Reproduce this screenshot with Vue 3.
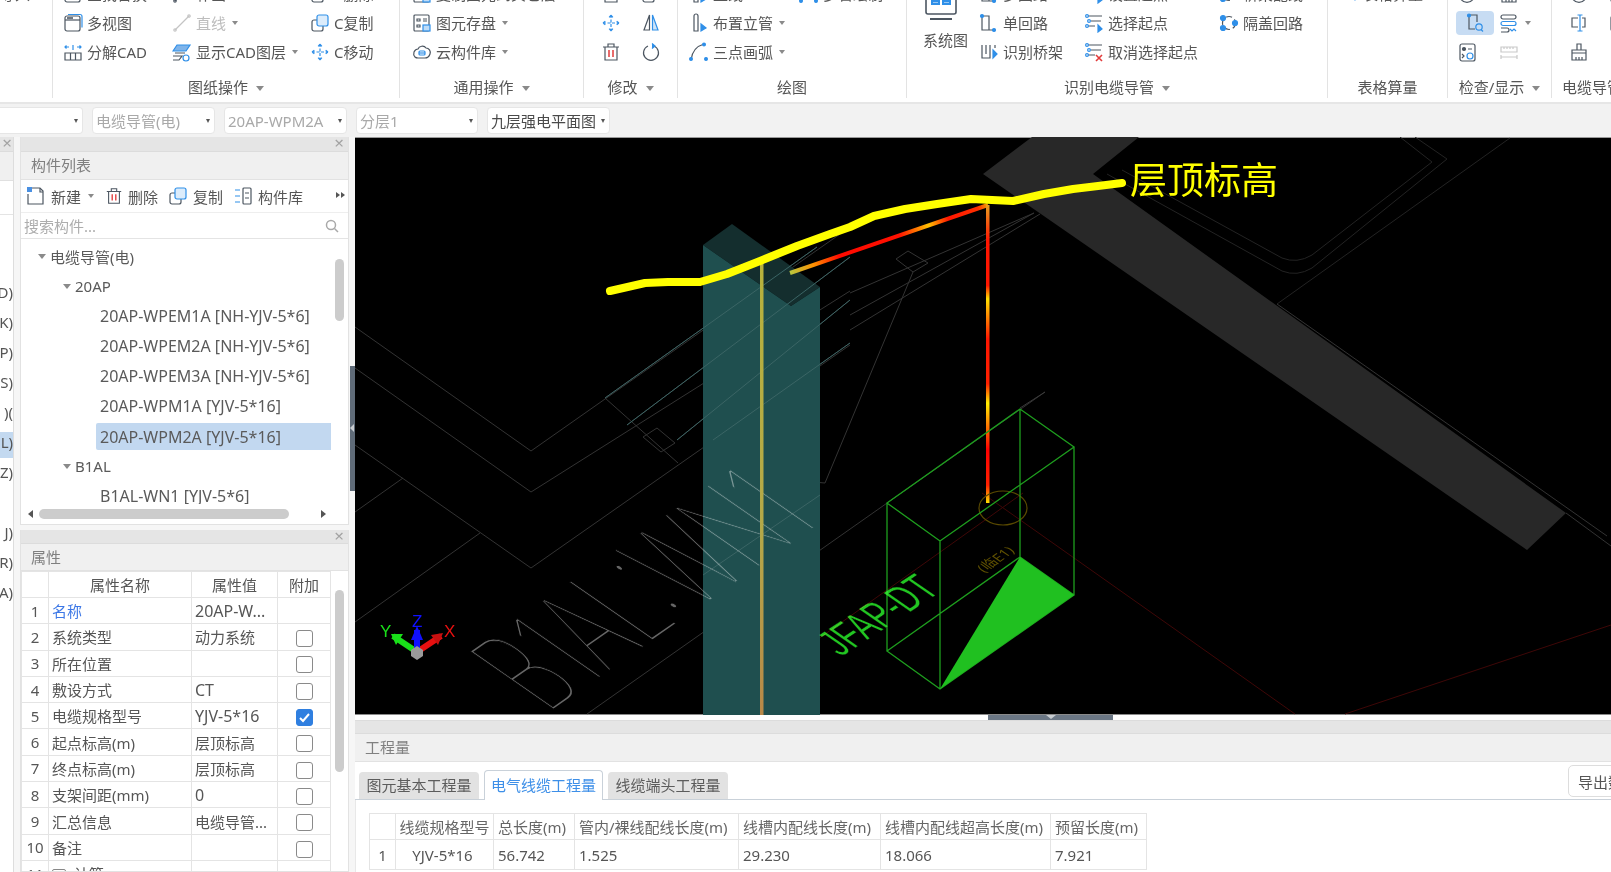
<script setup>
const D = '#4c5661'
const B = '#2f8fe8'

// inner markup of the ribbon icons, 20x20
const icons = {
  blank: '',
  view: `<rect x="2" y="3" width="15" height="15" rx="2"/><path d="M2 7h15"/><path d="M5 1.5h12a2 2 0 0 1 2 2v11" stroke="${B}"/><path d="M4 5h6" stroke-width="1.6"/>`,
  explode: `<path d="M2 11h16v7H2zM7.500 11v7M12.500 11v7"/><path d="M2 5h4M3.500 3.500 2 5l1.500 1.500M18 5h-4M16.500 3.500 18 5l-1.500 1.500M10 3v5" stroke="${B}"/>`,
  line: `<path d="M3 17 17 3"/><circle cx="3" cy="17" r="1.200"/><circle cx="17" cy="3" r="1.200"/>`,
  layers: `<path d="M5 3h13l-4 6H1z" fill="#7fb4ea" stroke="${B}"/><path d="M3 11h10M1 14h9l-3 4H1"/><circle cx="14" cy="16" r="3" stroke="${B}"/>`,
  copy: `<rect x="2" y="7" width="11" height="11" rx="2"/><rect x="7" y="2" width="11" height="11" rx="2" fill="#dcecfb" stroke="${B}"/>`,
  move: `<path d="M10 2v16M2 10h16M10 2 8 4.500M10 2l2 2.500M10 18l-2-2.500M10 18l2-2.500M2 10l2.500-2M2 10l2.500 2M18 10l-2.500-2M18 10l-2.500 2" stroke="${B}" stroke-dasharray="3 1.500"/>`,
  save: `<rect x="2" y="2" width="15" height="16" rx="1"/><path d="M5 6h3v2H5zM5 12h3v2H5zM11 6h4M11 8h4"/><rect x="11" y="12" width="7" height="6" fill="#bfdcf7" stroke="${B}"/>`,
  cloud: `<path d="M3 15a5 5 0 0 1-1-5c1-2 3-3 4-3 1-3 6-4 8-1 3 0 5 3 4 6-1 3-3 4-5 4H6c-1 0-2 0-3-1z"/><rect x="7" y="9" width="6" height="4" rx="1" stroke="${B}"/><path d="M7 11h6" stroke="${B}"/>`,
  mirror: `<path d="M8.500 2v15H3z"/><path d="M11.500 2v15H17z" fill="#cfe4f8" stroke="${B}"/>`,
  trash: `<path d="M4 5h12v13H4zM2 5h16M7 5V2h6v3"/><path d="M8 8v7M12 8v7" stroke="#e23b3b" stroke-width="1.500"/>`,
  rotate: `<path d="M13 4a7.500 7.500 0 1 1-6 0"/><path d="M11 1.500 14 4l-3 2.500" fill="${B}" stroke="${B}"/>`,
  riser: `<path d="M5 3a2 2 0 0 1 4 0v15H5z"/><path d="M12 11l5 4-5 3z" fill="${B}" stroke="${B}"/>`,
  arc: `<path d="M2 18C3 9 8 4 15 2"/><circle cx="15" cy="2.500" r="1.400" fill="${B}" stroke="${B}"/><circle cx="2" cy="17" r="1.400" fill="${B}" stroke="${B}"/><circle cx="17" cy="17" r="1.400" fill="${B}" stroke="${B}"/>`,
  single: `<path d="M3 3v14h12"/><path d="M3 3h7v14" /><circle cx="3" cy="3" r="1.500" fill="${B}" stroke="${B}"/><circle cx="15" cy="17" r="1.500" fill="${B}" stroke="${B}"/>`,
  bridge: `<path d="M3 3v13h8V3M7 3v9"/><path d="M14 8l4 4-4 4z" fill="${B}" stroke="${B}"/><path d="M16 3v3" />`,
  select: `<path d="M4 3h14M7 8h10M4 13h7" /><circle cx="3" cy="3" r="1.400" stroke="${B}"/><circle cx="5" cy="8" r="1.400" stroke="${B}"/><circle cx="3" cy="13" r="1.400" stroke="${B}"/><path d="M14 12l4 4-4 3z" fill="${B}" stroke="${B}"/>`,
  cancel: `<path d="M4 3h14M7 8h10M4 13h7" /><circle cx="3" cy="3" r="1.400" stroke="${B}"/><circle cx="5" cy="8" r="1.400" stroke="${B}"/><circle cx="3" cy="13" r="1.400" stroke="${B}"/><path d="M12 13l6 6M18 13l-6 6" stroke="#e23b3b" stroke-width="1.600"/>`,
  cover: `<circle cx="10" cy="10" r="6.500" stroke-dasharray="6 3"/><circle cx="4" cy="5" r="2.500" fill="${B}" stroke="${B}"/><circle cx="4" cy="15" r="2.500" fill="${B}" stroke="${B}"/><circle cx="16" cy="10" r="2.500" fill="${B}" stroke="${B}"/>`,
  system: `<path d="M3 2v24a2 2 0 0 0 2 2h26a2 2 0 0 0 2-2V2"/><path d="M7 33h22" stroke-width="2"/><path d="M9 4v14h7V4M20 4v14h7V4" stroke="${B}" stroke-width="2"/><path d="M10 15h5M21 15h5" stroke="${B}" stroke-width="3"/>`,
  tableq: `<path d="M2 4h10v9H2z"/><path d="M14 8l5 5-3 3-4-4z" stroke="${B}"/>`,
  inspect: `<path d="M4 2v14h6" /><path d="M4 2h8v7"/><circle cx="4" cy="2.500" r="1.500" fill="${B}" stroke="${B}"/><circle cx="14" cy="14" r="3.200" stroke="${B}"/><path d="M16 16.500 18 18.500" stroke="${B}"/>`,
  bands: `<rect x="2" y="2" width="15" height="4" rx="2"/><rect x="2" y="8.500" width="15" height="4" rx="2" stroke="${B}"/><path d="M2 15h6a2 2 0 0 1 0 4H2"/><path d="M11 16l2 2 2-2 2 2" stroke="${B}"/>`,
  list: `<rect x="3" y="2" width="15" height="17" rx="2"/><circle cx="7" cy="7" r="1.500" fill="${D}"/><path d="M11 7h4M5 12l2 2-2 2"/><circle cx="13" cy="14" r="3" stroke="${B}"/>`,
  ruler: `<g stroke="#c9c9c9"><path d="M2 5h16v5H2zM5 5v2M8 5v2M11 5v2M14 5v2M2 15h16M2 13v4M18 13v4"/></g>`,
  mid: `<path d="M9 5H3v9h6M13 5h3v9h-3"/><path d="M11 2v16M8.500 2h5M8.500 18h5" stroke="${B}"/>`,
  brush: `<path d="M8 2h4v6H8zM3 8h14v3H3zM3 11h14v7H3zM7 15v3M10 15v3M13 15v3"/>`,
  edge: `<path d="M10 3v8M2 13h12" stroke="${B}"/>`
}

const ribbon = [
  { label: '', width: 53, pad: 0, cols: [{ w: 40, items: [{ text: '导入' }] }] },
  {
    label: '图纸操作', width: 347, pad: 10, arrow: true,
    cols: [
      { w: 109, items: [{ icon: 'view', text: '查找替换' }, { icon: 'view', text: '多视图' }, { icon: 'explode', text: '分解CAD' }] },
      { w: 138, items: [{ icon: 'line', text: '补画CAD' }, { icon: 'line', text: '直线', arrow: true, muted: true }, { icon: 'layers', text: '显示CAD图层', arrow: true }] },
      { w: 80, items: [{ icon: 'copy', text: 'C删除' }, { icon: 'copy', text: 'C复制' }, { icon: 'move', text: 'C移动' }] }
    ]
  },
  {
    label: '通用操作', width: 184, pad: 12, arrow: true,
    cols: [{ w: 170, items: [{ icon: 'save', text: '复制图元到其它层' }, { icon: 'save', text: '图元存盘', arrow: true }, { icon: 'cloud', text: '云构件库', arrow: true }] }]
  },
  {
    label: '修改', width: 94, pad: 17, arrow: true,
    cols: [
      { w: 40, items: [{ icon: 'trash' }, { icon: 'move' }, { icon: 'trash' }] },
      { w: 30, items: [{ icon: 'copy' }, { icon: 'mirror' }, { icon: 'rotate' }] }
    ]
  },
  {
    label: '绘图', width: 229, pad: 11,
    cols: [
      { w: 110, items: [{ icon: 'riser', text: '直线' }, { icon: 'riser', text: '布置立管', arrow: true }, { icon: 'arc', text: '三点画弧', arrow: true }] },
      { w: 90, items: [{ icon: 'arc', text: '多管绘制' }] }
    ]
  },
  {
    label: '识别电缆导管', width: 421, pad: 16, arrow: true, system: true,
    cols: [
      { w: 105, items: [{ icon: 'single', text: '多回路' }, { icon: 'single', text: '单回路' }, { icon: 'bridge', text: '识别桥架' }] },
      { w: 135, items: [{ icon: 'select', text: '设置起点' }, { icon: 'select', text: '选择起点' }, { icon: 'cancel', text: '取消选择起点' }] },
      { w: 100, items: [{ icon: 'cover', text: '桥架配线' }, { icon: 'cover', text: '隔盖回路' }] }
    ]
  },
  {
    label: '表格算量', width: 120, pad: 11,
    cols: [{ w: 100, items: [{ icon: 'tableq', text: '表格算量' }] }]
  },
  {
    label: '检查/显示', width: 104, pad: 9, arrow: true,
    cols: [
      { w: 42, items: [{ icon: 'rotate' }, { icon: 'inspect', active: true }, { icon: 'list' }] },
      { w: 40, items: [{ icon: 'brush' }, { icon: 'bands', arrow: true }, { icon: 'ruler' }] }
    ]
  },
  {
    label: '电缆导管', width: 80, pad: 17,
    cols: [
      { w: 40, items: [{ icon: 'rotate' }, { icon: 'mid' }, { icon: 'brush' }] },
      { w: 30, items: [{ icon: 'view' }, { icon: 'view' }, { icon: 'edge' }] }
    ]
  }
]

const combos = [
  { text: '', width: 83, flat: true },
  { text: '电缆导管(电)', width: 123 },
  { text: '20AP-WPM2A', width: 123 },
  { text: '分层1', width: 122 },
  { text: '九层强电平面图', width: 123, strong: true }
]

const stripRows = [
  { top: 293, text: 'D)' }, { top: 323, text: 'K)' }, { top: 353, text: 'P)' }, { top: 383, text: 'S)' },
  { top: 413, text: ')(' }, { top: 443, text: 'L)', active: true }, { top: 473, text: 'Z)' },
  { top: 533, text: 'J)' }, { top: 563, text: 'R)' }, { top: 593, text: 'A)' }
]

const tree = [
  { level: 0, text: '电缆导管(电)', open: true },
  { level: 1, text: '20AP', open: true },
  { level: 2, text: '20AP-WPEM1A [NH-YJV-5*6]' },
  { level: 2, text: '20AP-WPEM2A [NH-YJV-5*6]' },
  { level: 2, text: '20AP-WPEM3A [NH-YJV-5*6]' },
  { level: 2, text: '20AP-WPM1A [YJV-5*16]' },
  { level: 2, text: '20AP-WPM2A [YJV-5*16]', selected: true },
  { level: 1, text: 'B1AL', open: true },
  { level: 2, text: 'B1AL-WN1 [YJV-5*6]' }
]

const props = [
  { name: '名称', value: '20AP-W...', link: true, noCheck: true },
  { name: '系统类型', value: '动力系统' },
  { name: '所在位置', value: '' },
  { name: '敷设方式', value: 'CT' },
  { name: '电缆规格型号', value: 'YJV-5*16', checked: true },
  { name: '起点标高(m)', value: '层顶标高' },
  { name: '终点标高(m)', value: '层顶标高' },
  { name: '支架间距(mm)', value: '0' },
  { name: '汇总信息', value: '电缆导管...' },
  { name: '备注', value: '' },
  { name: '计算', value: '', plus: true, noCheck: true }
]

// faint CAD linework, in page coordinates
const cadLines = [
  'M355 327 531 451 850 227',
  'M355 368 531 492 850 291',
  'M355 445 531 568 850 345',
  'M355 512 403 478',
  'M355 622 480 533',
  'M587 714 1045 392',
  'M605 398 817 247',
  'M605 398 678 463',
  'M627 425 850 257',
  'M677 440 850 300',
  'M713 440 850 343',
  'M643 437 657 428 675 443 661 452Z',
  'M896 259 908 251 928 263 913 272Z',
  'M850 293 1034 213',
  'M850 315 1034 213',
  'M850 330 1040 214',
  'M913 272 825 483 763 478',
  'M1277 304 1607 536',
  'M1566 513 1611 546'
]

// the room outline top right is fainter than the rest
const roomLines = [
  'M1107 174 1282 271Q1297 277 1312 268L1447 159 1415 137',
  'M1122 170 1282 258Q1297 264 1312 255L1432 162 1400 137',
  'M1277 304 1510 138'
]

const polyline = '610 291 645 283 668 282 700 282 727 274 760 261 797 246 830 234 850 227 874 216 905 209 937 204 971 199 1013 201 1044 194 1073 189 1098 186 1122 183'
</script>

<template>
  <div class="app">
    <header class="ribbon">
      <section
        v-for="(group, g) in ribbon"
        :key="g"
        class="rb-group"
        :style="{ width: group.width + 'px' }"
      >
        <div class="rb-body" :style="{ paddingLeft: group.pad + 'px' }">
          <div v-if="group.system" class="rb-system">
            <svg width="36" height="36" viewBox="0 0 36 36" fill="none" :stroke="D" stroke-width="1.600" class="sys-icon" v-html="icons.system"></svg>
            <span>系统图</span>
          </div>
          <div v-for="(col, c) in group.cols" :key="c" class="rb-col" :style="{ width: col.w + 'px' }">
            <div
              v-for="(item, i) in col.items"
              :key="i"
              class="rb-item"
              :class="{ muted: item.muted, active: item.active }"
            >
              <svg v-if="item.icon" width="20" height="20" viewBox="0 0 20 20" fill="none" :stroke="item.muted ? '#c4c4c4' : D" stroke-width="1.200" v-html="icons[item.icon]"></svg>
              <span v-if="item.text">{{ item.text }}</span>
              <i v-if="item.arrow" class="caret small"></i>
            </div>
          </div>
        </div>
        <div class="rb-label">
          {{ group.label }}<i v-if="group.arrow" class="caret"></i>
        </div>
      </section>
    </header>

    <div class="combo-bar">
      <div
        v-for="(combo, i) in combos"
        :key="i"
        class="combo"
        :class="{ strong: combo.strong, flat: combo.flat }"
        :style="{ width: combo.width + 'px' }"
      >
        <span>{{ combo.text }}</span><i class="caret dark"></i>
      </div>
    </div>

    <div class="main">
      <aside class="strip">
        <div class="panel-head"><span class="close">×</span></div>
        <div class="strip-title"></div>
        <div class="strip-tool"></div>
        <div class="strip-list">
          <div
            v-for="row in stripRows"
            :key="row.top"
            class="strip-row"
            :class="{ active: row.active }"
            :style="{ top: row.top - 213 + 'px' }"
          >{{ row.text }}</div>
        </div>
      </aside>

      <aside class="side">
        <section class="panel list-panel">
          <div class="panel-head"><span class="close">×</span></div>
          <div class="panel-title">构件列表</div>
          <div class="list-tools">
            <button class="tool">
              <svg width="20" height="20" viewBox="0 0 20 20" fill="none" :stroke="D" stroke-width="1.200">
                <path d="M2 8v10h15V5l-3-3H6" /><path d="M14 2v4h3" /><rect x="1" y="1" width="5" height="5" fill="#4a90e2" stroke="none" />
              </svg>
              新建<i class="caret small tool-caret"></i>
            </button>
            <button class="tool">
              <svg width="18" height="20" viewBox="0 0 20 20" fill="none" :stroke="D" stroke-width="1.200" v-html="icons.trash"></svg>
              删除
            </button>
            <button class="tool">
              <svg width="20" height="20" viewBox="0 0 20 20" fill="none" :stroke="D" stroke-width="1.200" v-html="icons.copy"></svg>
              复制
            </button>
            <button class="tool">
              <svg width="20" height="20" viewBox="0 0 20 20" fill="none" :stroke="D" stroke-width="1.200">
                <path d="M2 4h5M2 10h5M2 16h5" stroke="#2f8fe8" /><rect x="10" y="2" width="8" height="16" rx="1" /><path d="M12 7h4M12 12h4" />
              </svg>
              构件库
            </button>
            <span class="more"><i></i><i></i></span>
          </div>
          <div class="search">
            <input placeholder="搜索构件..." readonly />
            <svg width="14" height="14" viewBox="0 0 14 14" fill="none" stroke="#a9a9a9" stroke-width="1.500">
              <circle cx="6" cy="6" r="4.500" /><path d="M9.500 9.500 13 13" />
            </svg>
          </div>
          <div class="tree">
            <div
              v-for="node in tree"
              :key="node.text"
              class="tree-row"
              :class="['level-' + node.level, { selected: node.selected }]"
            >
              <i v-if="node.open" class="caret tree-caret"></i>
              <span>{{ node.text }}</span>
            </div>
            <div class="scroll-v"></div>
            <div class="scroll-h">
              <i class="arrow-left"></i>
              <span class="thumb"></span>
              <i class="arrow-right"></i>
            </div>
          </div>
        </section>

        <section class="panel prop-panel">
          <div class="panel-head"><span class="close">×</span></div>
          <div class="panel-title">属性</div>
          <div class="prop-body">
            <table class="prop-table">
              <colgroup>
                <col style="width: 27px" /><col style="width: 143px" /><col style="width: 86px" /><col style="width: 53px" />
              </colgroup>
              <thead>
                <tr><th></th><th>属性名称</th><th>属性值</th><th>附加</th></tr>
              </thead>
              <tbody>
                <tr v-for="(row, i) in props" :key="row.name">
                  <td class="num">{{ i + 1 }}</td>
                  <td :class="{ link: row.link }"><span v-if="row.plus" class="plus">+</span>{{ row.name }}</td>
                  <td :class="{ latin: /^[\x00-\x7f]+$/.test(row.value) }">{{ row.value }}</td>
                  <td class="check-cell">
                    <span v-if="!row.noCheck" class="check" :class="{ on: row.checked }">
                      <svg v-if="row.checked" width="13" height="13" viewBox="0 0 13 13" fill="none" stroke="#fff" stroke-width="2"><path d="M2 7l3 3 6-7" /></svg>
                    </span>
                  </td>
                </tr>
              </tbody>
            </table>
            <div class="scroll-v prop-scroll"></div>
          </div>
        </section>
      </aside>

      <main class="work">
        <div class="canvas">
          <svg class="cad" width="1256" height="578" viewBox="355 137 1256 578">
            <defs>
              <linearGradient id="riser" gradientUnits="userSpaceOnUse" x1="0" y1="205" x2="0" y2="503">
                <stop offset="0" stop-color="#e8a020" />
                <stop offset="0.12" stop-color="#ff1500" />
                <stop offset="0.27" stop-color="#ff1500" />
                <stop offset="0.315" stop-color="#ffe000" />
                <stop offset="0.45" stop-color="#ff1500" />
                <stop offset="0.6" stop-color="#ff2000" />
                <stop offset="0.665" stop-color="#ffee00" />
                <stop offset="0.82" stop-color="#ff0000" />
                <stop offset="0.94" stop-color="#ff2000" />
                <stop offset="1" stop-color="#ffe000" />
              </linearGradient>
              <linearGradient id="run" gradientUnits="userSpaceOnUse" x1="790" y1="273" x2="988" y2="205">
                <stop offset="0" stop-color="#b8c840" />
                <stop offset="0.12" stop-color="#ff9000" />
                <stop offset="0.25" stop-color="#ff0a00" />
                <stop offset="0.55" stop-color="#ff1000" />
                <stop offset="0.7" stop-color="#ffc000" />
                <stop offset="0.8" stop-color="#ff1500" />
                <stop offset="0.95" stop-color="#ff3000" />
                <stop offset="1" stop-color="#f0a000" />
              </linearGradient>
              <linearGradient id="mast" gradientUnits="userSpaceOnUse" x1="0" y1="260" x2="0" y2="715">
                <stop offset="0" stop-color="#b8b23c" />
                <stop offset="0.6" stop-color="#b4a848" />
                <stop offset="1" stop-color="#b88848" />
              </linearGradient>
            </defs>

            <polygon points="983,174 1032,137 1139,137 1093,174 1566,513 1527,550" fill="#282828" />
            <path v-for="d in roomLines" :key="d" :d="d" fill="none" stroke="#232323" stroke-width="1" />
            <path v-for="d in cadLines" :key="d" :d="d" fill="none" stroke="#333" stroke-width="1" />

            <path d="M713 714 1023 493M982 493 1295 714M1345 714 1611 625" fill="none" stroke="#3f0707" stroke-width="1" />

            <polygon points="703,245 732,224 820,287 791,306" fill="#142e2e" />
            <polygon points="703,245 791,306 820,287 820,715 703,715" fill="#1f4f4f" />
            <path d="M605 398 817 247M627 425 850 257M677 440 850 300M713 440 850 343M703 575 820 495" fill="none" stroke="#3b6565" stroke-width="1" />
            <text class="cad-note" transform="matrix(0.43 -0.3 0.82 0.57 547 714)" x="0" y="0">B1AL:WN1</text>
            <rect x="760" y="262" width="3.500" height="453" fill="url(#mast)" />

            <path d="M790 273 988 205" stroke="url(#run)" stroke-width="4" fill="none" />
            <rect x="986" y="205" width="3.500" height="298" fill="url(#riser)" />
            <ellipse cx="1003" cy="508" rx="24" ry="17" fill="none" stroke="#5a4a00" stroke-width="1.200" />

            <g fill="none" stroke="#1e9e1e" stroke-width="1.300">
              <path d="M887 503 1020 409 1074 447 940 541ZM887 651 1020 557 1074 595 940 689ZM887 503V651M940 541V689M1020 409V557M1074 447V595" />
            </g>
            <polygon points="940,689 1020,557 1074,595" fill="#20c020" />
            <path d="M1020 408 1045 392" stroke="#3a3a3a" fill="none" />
            <text class="jfap" transform="matrix(0.62 -0.405 0.98 0.68 841 657)">JFAP-DT</text>
            <text class="small-note" transform="matrix(0.82 -0.57 0.82 0.57 984 573)">(临E1)</text>

            <polyline :points="polyline" fill="none" stroke="#ffff00" stroke-width="8" stroke-linecap="round" stroke-linejoin="round" />
            <text class="elev" x="1130" y="194">层顶标高</text>

            <g class="gizmo">
              <path d="M417 652 393 636" stroke="#19e019" stroke-width="6" />
              <polygon points="391,634 403,634 396,645" fill="#19e019" />
              <path d="M417 652 441 636" stroke="#e81010" stroke-width="6" />
              <polygon points="443,633 431,635 438,645" fill="#c81010" />
              <path d="M417 652V630" stroke="#1010ff" stroke-width="6" />
              <polygon points="417,626 411,640 423,640" fill="#1010ff" />
              <polygon points="417,646 423,650 423,656 417,660 411,656 411,650" fill="#9a9a9a" />
              <text x="380" y="637" fill="#19e019">Y</text>
              <text x="412" y="627" fill="#1010ff">Z</text>
              <text x="444" y="637" fill="#e81010">X</text>
            </g>
          </svg>
          <div class="split-left"><i></i></div>
        </div>

        <div class="split-gap"><div class="split-bottom"><i></i></div></div>

        <section class="quantities">
          <div class="panel-head"></div>
          <div class="panel-title">工程量</div>
          <div class="tab-row">
            <div class="tab">图元基本工程量</div>
            <div class="tab active">电气线缆工程量</div>
            <div class="tab">线缆端头工程量</div>
            <button class="export">导出数据</button>
          </div>
          <div class="q-body">
            <table class="q-table">
              <colgroup>
                <col style="width: 26px" /><col style="width: 98px" /><col style="width: 81px" /><col style="width: 164px" />
                <col style="width: 142px" /><col style="width: 170px" /><col style="width: 96px" />
              </colgroup>
              <thead>
                <tr>
                  <th></th><th>线缆规格型号</th><th>总长度(m)</th><th>管内/裸线配线长度(m)</th>
                  <th>线槽内配线长度(m)</th><th>线槽内配线超高长度(m)</th><th>预留长度(m)</th>
                </tr>
              </thead>
              <tbody>
                <tr>
                  <td class="num">1</td><td class="center">YJV-5*16</td><td>56.742</td><td>1.525</td>
                  <td>29.230</td><td>18.066</td><td>7.921</td>
                </tr>
              </tbody>
            </table>
          </div>
        </section>
      </main>
    </div>
  </div>
</template>

<style>
html, body {
  margin: 0;
  overflow: hidden;
  background: #f6f6f6;
}
</style>

<style scoped>
.app {
  width: 1611px;
  height: 872px;
  overflow: hidden;
  display: flex;
  flex-direction: column;
  font-family: "Noto Sans", "Noto Sans CJK SC", sans-serif;
  font-size: 15px;
  color: #565656;
}

/* ribbon */
.ribbon {
  display: flex;
  height: 104px;
  flex: none;
  background: #fff;
  border-bottom: 2px solid #e6e6e6;
  box-sizing: border-box;
  overflow: hidden;
}
.rb-group {
  flex: none;
  box-sizing: border-box;
  height: 98px;
  border-right: 1px solid #e3e3e3;
  display: flex;
  flex-direction: column;
}
.rb-group:last-child {
  border-right: none;
}
.rb-body {
  display: flex;
  flex: none;
  height: 98px;
  margin-top: -21px;
  box-sizing: border-box;
}
.rb-col {
  flex: none;
}
.rb-item {
  display: flex;
  align-items: center;
  gap: 4px;
  height: 29px;
  white-space: nowrap;
}
.rb-item.muted {
  color: #bdbdbd;
}
.rb-item.active svg {
  background: #c7dcf3;
  border-radius: 4px;
  padding: 2px 9px;
  margin-left: -1px;
}
.rb-system {
  width: 56px;
  flex: none;
  display: flex;
  flex-direction: column;
  line-height: 20px;
}
.sys-icon {
  margin: 7px 0 8px;
}
.rb-label {
  flex: none;
  height: 21px;
  line-height: 20px;
  text-align: center;
  white-space: nowrap;
}
.caret {
  display: inline-block;
  width: 0;
  height: 0;
  border-left: 4px solid transparent;
  border-right: 4px solid transparent;
  border-top: 5px solid #8a8a8a;
  margin-left: 8px;
  vertical-align: middle;
}
.caret.small {
  border-left-width: 3px;
  border-right-width: 3px;
  border-top-width: 4px;
  margin-left: 2px;
}
.caret.dark {
  border-left-width: 2.5px;
  border-right-width: 2.5px;
  border-top: 4px solid #555;
  margin-left: auto;
}

/* combo row */
.combo-bar {
  display: flex;
  gap: 9px;
  align-items: center;
  height: 33px;
  flex: none;
  background: #f2f2f2;
  box-sizing: border-box;
}
.combo {
  flex: none;
  box-sizing: border-box;
  height: 27px;
  padding: 0 4px 0 3px;
  display: flex;
  align-items: center;
  background: #fff;
  border: 1px solid #e6e6e6;
  border-radius: 4px;
  color: #a9a9a9;
  white-space: nowrap;
}
.combo.strong {
  color: #4a4a4a;
}
.combo.flat {
  border-left: none;
  border-radius: 0 4px 4px 0;
}

/* left side */
.main {
  flex: 1;
  min-height: 0;
  display: flex;
}
.strip {
  width: 14px;
  flex: none;
  display: flex;
  flex-direction: column;
  border-right: 1px solid #ddd;
  box-sizing: border-box;
  background: #fff;
}
.strip .panel-head {
  width: 100%;
}
.strip .close {
  right: 1px;
}
.strip-title {
  height: 28px;
  flex: none;
  background: #f0f0f0;
  border-bottom: 1px solid #e0e0e0;
}
.strip-tool {
  height: 33px;
  flex: none;
  border-bottom: 1px solid #e4e4e4;
}
.strip-list {
  position: relative;
  flex: 1;
  overflow: hidden;
}
.strip-row {
  position: absolute;
  right: 0;
  width: 30px;
  height: 26px;
  line-height: 20px;
  margin-top: -13px;
  text-align: right;
  white-space: nowrap;
  color: #555;
}
.strip-row.active {
  background: #c3d9f0;
}
.side {
  width: 329px;
  margin-left: 6px;
  flex: none;
  display: flex;
  flex-direction: column;
  gap: 5px;
}
.panel {
  background: #fff;
  border: 1px solid #e2e2e2;
  border-top: none;
  box-sizing: border-box;
  display: flex;
  flex-direction: column;
}
.list-panel {
  height: 388px;
  flex: none;
}
.prop-panel {
  flex: 1;
  min-height: 0;
  overflow: hidden;
}
.prop-panel .panel-head {
  height: 14px;
}
.prop-panel .panel-title {
  height: 27px;
}
.panel-head {
  position: relative;
  height: 15px;
  flex: none;
  background: #e5e5e5;
  border-bottom: 1px solid #dcdcdc;
  box-sizing: border-box;
}
.close {
  position: absolute;
  right: 4px;
  top: -3px;
  font-size: 17px;
  line-height: 18px;
  color: #a3a3a3;
}
.panel-title {
  height: 28px;
  line-height: 27px;
  flex: none;
  padding-left: 10px;
  background: #f0f0f0;
  border-bottom: 1px solid #e2e2e2;
  box-sizing: border-box;
  color: #808080;
}
.list-tools {
  display: flex;
  align-items: center;
  height: 32px;
  flex: none;
  padding-left: 5px;
  position: relative;
  border-bottom: 1px solid #eee;
}
.tool {
  display: flex;
  align-items: center;
  gap: 5px;
  padding: 0;
  margin-right: 10px;
  border: none;
  background: none;
  font: inherit;
  color: inherit;
  white-space: nowrap;
}
.tool-caret {
  margin-left: 4px;
  margin-right: 1px;
}
.more {
  position: absolute;
  right: 3px;
  top: 12px;
  display: flex;
  gap: 1px;
}
.more i {
  width: 0;
  height: 0;
  border-top: 3.500px solid transparent;
  border-bottom: 3.500px solid transparent;
  border-left: 4px solid #555;
}
.search {
  height: 24px;
  flex: none;
  margin-top: 1px;
  display: flex;
  align-items: center;
  border-bottom: 1px solid #e4e4e4;
  padding-right: 9px;
}
.search input {
  flex: 1;
  min-width: 0;
  border: none;
  outline: none;
  padding: 0 0 0 3px;
  font: inherit;
  background: transparent;
}
.search input::placeholder {
  color: #adadad;
}
.tree {
  position: relative;
  flex: 1;
  min-height: 0;
  overflow: hidden;
  padding-top: 2px;
}
.tree-row {
  display: flex;
  align-items: center;
  height: 30px;
  white-space: nowrap;
  color: #5a5a5a;
}
.level-0 {
  padding-left: 29px;
}
.level-1 {
  padding-left: 54px;
}
.level-2 {
  padding-left: 79px;
  font-size: 16px;
}
.tree-caret {
  margin-left: -12px;
  margin-right: 4px;
}
.tree-row.selected {
  background: #c2d8f0;
  height: 27px;
  margin: 2px 17px 1px 75px;
  padding-left: 4px;
  border-radius: 2px 0 0 2px;
}
.scroll-v {
  position: absolute;
  right: 4px;
  top: 20px;
  width: 9px;
  height: 62px;
  background: #cccccc;
  border-radius: 5px;
}
.scroll-h {
  position: absolute;
  left: 0;
  right: 0;
  bottom: 0;
  height: 20px;
  background: #fff;
}
.thumb {
  position: absolute;
  left: 18px;
  top: 5px;
  width: 250px;
  height: 10px;
  border-radius: 5px;
  background: #cccccc;
}
.arrow-left,
.arrow-right {
  position: absolute;
  top: 6px;
  width: 0;
  height: 0;
  border-top: 4px solid transparent;
  border-bottom: 4px solid transparent;
}
.arrow-left {
  left: 7px;
  border-right: 5px solid #555;
}
.arrow-right {
  left: 300px;
  border-left: 5px solid #555;
}

/* property table */
.prop-body {
  position: relative;
  flex: 1;
}
.prop-table,
.q-table {
  border-collapse: collapse;
  table-layout: fixed;
}
.prop-table {
  width: 309px;
}
.prop-table th,
.prop-table td,
.q-table th,
.q-table td {
  border: 1px solid #e4e4e4;
  padding: 0 3px;
  font-weight: normal;
  white-space: nowrap;
  overflow: hidden;
  box-sizing: border-box;
}
.prop-table th {
  height: 26px;
  text-align: center;
}
.prop-table td {
  height: 26.300px;
}
.prop-table td.latin {
  font-size: 16px;
}
.num {
  text-align: center;
  padding: 0 !important;
}
.link {
  color: #3d78e6;
}
.check-cell {
  text-align: center;
  padding: 0 !important;
}
.check {
  display: inline-flex;
  align-items: center;
  justify-content: center;
  width: 17px;
  height: 17px;
  box-sizing: border-box;
  border: 1px solid #8a8a8a;
  border-radius: 3px;
  vertical-align: middle;
}
.check.on {
  background: #2f7fe0;
  border-color: #2f7fe0;
}
.plus {
  display: inline-block;
  width: 14px;
  height: 14px;
  line-height: 12px;
  text-align: center;
  border: 1px solid #888;
  border-radius: 2px;
  box-sizing: border-box;
  margin-right: 8px;
  font-size: 12px;
}
.prop-scroll {
  top: 19px;
  height: 182px;
}

/* canvas */
.work {
  width: 1256px;
  margin-left: 6px;
  flex: none;
  display: flex;
  flex-direction: column;
}
.canvas {
  position: relative;
  height: 578px;
  flex: none;
  background: #000;
  border-top: 1px solid #9a9a9a;
  border-bottom: 1px solid #8a8a8a;
  box-sizing: border-box;
}
.cad {
  display: block;
  position: absolute;
  left: 0;
  top: -1px;
}
/* thin CAD lettering: black stroke eats the fill, screen drops the black */
.cad-note {
  font-family: Inter, sans-serif;
  font-weight: 100;
  font-size: 140px;
  fill: #666;
  stroke: #000;
  stroke-width: 1.5px;
  mix-blend-mode: screen;
}
.jfap {
  font-family: "Liberation Sans", sans-serif;
  font-size: 40px;
  fill: #22c522;
  stroke: #000;
  stroke-width: 0.3px;
  mix-blend-mode: screen;
}
.small-note {
  font-size: 14px;
  fill: #5f5000;
}
.elev {
  font-family: "Noto Sans CJK SC", sans-serif;
  font-size: 37px;
  fill: #ffff00;
}
.gizmo text {
  font-family: "Liberation Sans", sans-serif;
  font-size: 17px;
}
.split-left {
  position: absolute;
  left: -5px;
  top: 228px;
  width: 5px;
  height: 125px;
  background: #5f6b78;
}
.split-left i {
  position: absolute;
  left: 0;
  top: 58px;
  border-top: 4px solid transparent;
  border-bottom: 4px solid transparent;
  border-right: 4px solid #c8ccd0;
}
.split-gap {
  height: 5px;
  flex: none;
  background: #fff;
  position: relative;
}
.split-bottom {
  position: absolute;
  left: 633px;
  top: 0;
  width: 125px;
  height: 5px;
  background: #6b7785;
}
.split-bottom i {
  position: absolute;
  left: 58px;
  top: 0;
  border-left: 5px solid transparent;
  border-right: 5px solid transparent;
  border-top: 4px solid #c8ccd0;
}

/* quantities */
.quantities {
  flex: 1;
  min-height: 0;
  display: flex;
  flex-direction: column;
  background: #fff;
  overflow: hidden;
}
.quantities .panel-head {
  height: 14px;
  border-top: 1px solid #dcdcdc;
}
.tab-row {
  height: 38px;
  flex: none;
  display: flex;
  align-items: flex-end;
  gap: 5px;
  padding-left: 4px;
  box-sizing: border-box;
  border-bottom: 1px solid #c9d1d9;
  position: relative;
}
.tab {
  width: 120px;
  height: 27px;
  line-height: 27px;
  text-align: center;
  background: #e2e2e2;
  border-radius: 4px 4px 0 0;
  color: #5c5c5c;
  white-space: nowrap;
}
.tab.active {
  height: 29px;
  line-height: 29px;
  background: #fff;
  border: 1px solid #c9d1d9;
  border-bottom: none;
  color: #3d8fe8;
  box-sizing: content-box;
  margin-bottom: -1px;
  width: 117px;
}
.export {
  position: absolute;
  left: 1213px;
  top: 3px;
  width: 80px;
  height: 32px;
  padding: 0 0 0 9px;
  background: #fff;
  border: 1px solid #ddd;
  border-radius: 5px;
  font: inherit;
  color: #555;
  text-align: left;
  white-space: nowrap;
  overflow: hidden;
}
.q-body {
  flex: 1;
  padding: 13px 0 0 13px;
  border-left: 1px solid #e8e8e8;
}
.q-table {
  width: 777px;
  border-top: 1px solid #e4e4e4;
}
.q-table th {
  height: 26px;
  text-align: left;
  padding: 0 0 0 4px;
  color: #666;
}
.q-table th:nth-child(2) {
  text-align: center;
  padding: 0;
}
.q-table td {
  height: 30px;
  padding: 0 0 0 4px;
}
.q-table td.center {
  text-align: center;
  padding: 0 4px 0 0;
}
</style>
